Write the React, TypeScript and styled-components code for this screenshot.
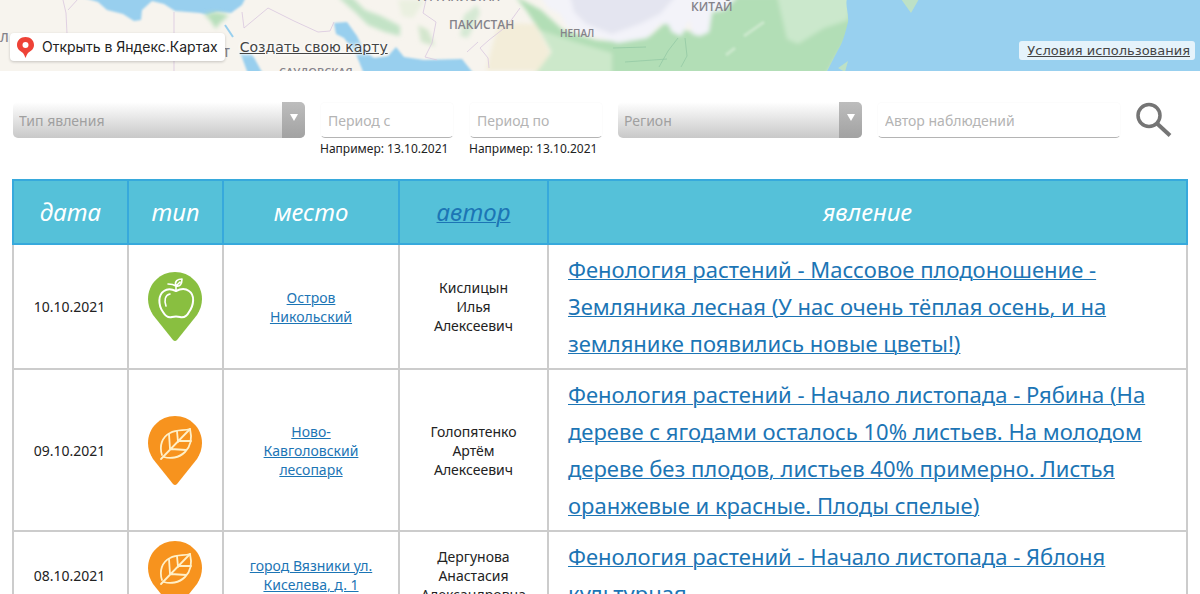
import React from "react";
import styled, { createGlobalStyle } from "styled-components";

const GlobalStyle = createGlobalStyle`
  * { box-sizing: border-box; }
  body {
    margin: 0;
    background: #fff;
    color: #222;
    font-family: "Noto Sans", "Open Sans", sans-serif;
    font-size: 14px;
    line-height: 19px;
  }
`;

const MapStrip = styled.section`
  position: relative;
  height: 71px;
  overflow: hidden;
  background: #f6f3ec;
`;

const MapDrawing = styled.svg`
  display: block;
  width: 100%;
  height: 71px;
`;

const MapLabel = styled.text<{ $size?: number }>`
  font-family: "Open Sans", sans-serif;
  font-size: ${(p) => p.$size ?? 12}px;
  font-weight: 600;
  fill: #84828a;
`;

const MapControls = styled.div`
  position: absolute;
  left: 10px;
  bottom: 10px;
  display: flex;
  align-items: center;
  gap: 15px;
`;

const OpenMapButton = styled.button`
  display: flex;
  align-items: center;
  gap: 8px;
  height: 28px;
  padding: 0 7px;
  border: 0;
  border-radius: 4px;
  background: #fff;
  color: #222;
  font: 14px/20px Inter, Arial, sans-serif;
  box-shadow: 0 1px 3px rgba(0, 0, 0, 0.2);
  cursor: pointer;
`;

const CreateMapLink = styled.a`
  color: #444;
  font: 14px/20px "DejaVu Sans", sans-serif;
  text-shadow: 0 0 2px #fff, 0 0 4px #fff, 0 0 4px #fff;
`;

const TermsLink = styled.a`
  position: absolute;
  right: 5px;
  bottom: 11px;
  padding: 0 5px 0 8px;
  border-radius: 3px;
  background: rgba(255, 255, 255, 0.75);
  color: #444;
  font: 13px/19px "DejaVu Sans", sans-serif;
`;

const Content = styled.main`
  padding: 31px 12px 0;
`;

const Filters = styled.form`
  display: grid;
  grid-template-columns: 292fr 134fr 134fr 244fr 244fr 36px;
  gap: 15px;
  align-items: start;
  padding: 0 16px 0 1px;
`;

const Field = styled.label`
  display: flex;
  flex-direction: column;
  min-width: 0;
`;

const HiddenName = styled.span`
  position: absolute;
  width: 1px;
  height: 1px;
  overflow: hidden;
  clip-path: inset(50%);
`;

const SelectBox = styled.span`
  display: flex;
  position: relative;
  height: 36px;
  border-radius: 5px;
  overflow: hidden;
  background: linear-gradient(#fff, #c8c8c8);
`;

const Select = styled.select`
  flex: 1;
  min-width: 0;
  padding: 0 6px;
  border: 0;
  appearance: none;
  background: transparent;
  color: #a0a0a0;
  font: inherit;
`;

const SelectArrow = styled.span`
  display: flex;
  justify-content: center;
  width: 23px;
  padding-top: 12px;
  background: linear-gradient(#bdbdbd, #a2a2a2);
  pointer-events: none;

  &::before {
    content: "";
    width: 0;
    height: 0;
    border: 4px solid transparent;
    border-top: 7px solid #fff;
    border-bottom: 0;
  }
`;

const TextInput = styled.input`
  width: 100%;
  height: 36px;
  padding: 0 7px;
  border: 1px solid #fcfcfc;
  border-bottom: 1px solid #b4b4b4;
  border-radius: 5px;
  background: #fff;
  color: #222;
  font: inherit;

  &::placeholder { color: #b4b4b4; opacity: 1; }
`;

const Hint = styled.span`
  font-size: 12px;
  line-height: 22px;
  white-space: nowrap;
`;

const SearchButton = styled.button`
  width: 36px;
  height: 36px;
  padding: 0;
  border: 0;
  background: none;
  cursor: pointer;
`;

const Table = styled.table`
  width: 100%;
  margin-top: 19px;
  border-collapse: collapse;
  table-layout: fixed;
`;

const HeadCell = styled.th`
  height: 64px;
  padding: 0;
  border: 2px solid #37a9dc;
  background: #55c1d9;
  color: #fff;
  font-size: 24px;
  font-style: italic;
  font-weight: 400;
  line-height: 32px;
`;

const Cell = styled.td<{ $wide?: boolean }>`
  padding: ${(p) => (p.$wide ? "6px 20px 6px 19px" : "0 20px")};
  border: 2px solid #ccc;
  text-align: ${(p) => (p.$wide ? "left" : "center")};
  font-size: ${(p) => (p.$wide ? 22 : 14)}px;
  line-height: ${(p) => (p.$wide ? 37 : 19)}px;
`;

const TightCell = styled(Cell)`
  padding: 0 2px 0 0;
`;

const NamePart = styled.span`
  display: block;
`;

const Link = styled.a`
  color: #1c75b5;
  text-decoration-thickness: 1px;
`;

const Pin = styled.svg`
  display: block;
  margin: 0 auto;
`;

type Kind = "fruit" | "leaf";

function PinIcon({ kind }: { kind: Kind }) {
  return (
    <Pin width="54" height="69" viewBox="0 0 54 69" role="img" aria-label={kind}>
      <path
        d="M27 0C12 0 0 12 0 27C0 33 2 38 5 43L25 68Q27 70 29 68L49 43C52 38 54 33 54 27C54 12 42 0 27 0Z"
        fill={kind === "fruit" ? "#89bf40" : "#f7931e"}
      />
      {kind === "fruit" ? (
        <g fill="none" stroke="#fff" strokeWidth="2" strokeLinecap="round" strokeLinejoin="round">
          <path d="M28 19C24 17 20 16 16 19C10 23 10 33 15 40C18 45 21 46 24 45Q28 44 32 45C36 46 39 44 41 40C46 33 47 23 41 19C37 16 32 17 28 19Z" />
          <path d="M22 22C17 23 16 28 18 34" strokeWidth="1.6" />
          <path d="M28 19V14Q25 12 20 12M28 14C26 9 30 7 34 7C34 12 32 15 28 14L32 10" strokeWidth="1.6" />
        </g>
      ) : (
        <g fill="none" stroke="#fff0c8" strokeWidth="1.8" strokeLinecap="round" strokeLinejoin="round">
          <path d="M14 39C11 30 14 21 22 17C29 13 36 15 42 13C44 21 43 30 37 36C31 42 22 43 16 41" />
          <path d="M13 43L42 13M22 33L21 18M30 26L29 15M23 33L38 34M31 25H43" />
        </g>
      )}
    </Pin>
  );
}

interface Observation {
  date: string;
  kind: Kind;
  place: string;
  author: string[];
  text: string;
}

const observations: Observation[] = [
  {
    date: "10.10.2021",
    kind: "fruit",
    place: "Остров Никольский",
    author: ["Кислицын", "Илья", "Алексеевич"],
    text: "Фенология растений - Массовое плодоношение - Земляника лесная (У нас очень тёплая осень, и на землянике появились новые цветы!)",
  },
  {
    date: "09.10.2021",
    kind: "leaf",
    place: "Ново-Кавголовский лесопарк",
    author: ["Голопятенко", "Артём", "Алексеевич"],
    text: "Фенология растений - Начало листопада - Рябина (На дереве с ягодами осталось 10% листьев. На молодом дереве без плодов, листьев 40% примерно. Листья оранжевые и красные. Плоды спелые)",
  },
  {
    date: "08.10.2021",
    kind: "leaf",
    place: "город Вязники ул. Киселева, д. 1",
    author: ["Дергунова", "Анастасия", "Александровна"],
    text: "Фенология растений - Начало листопада - Яблоня культурная",
  },
];

function SelectField({ name }: { name: string }) {
  return (
    <Field>
      <HiddenName>{name}</HiddenName>
      <SelectBox>
        <Select defaultValue="">
          <option value="">{name}</option>
        </Select>
        <SelectArrow />
      </SelectBox>
    </Field>
  );
}

function InputField({ name, hint }: { name: string; hint?: string }) {
  return (
    <Field>
      <TextInput type="text" placeholder={name} aria-label={name} />
      {hint && <Hint>{hint}</Hint>}
    </Field>
  );
}

function MapView() {
  return (
    <MapStrip>
      <MapDrawing viewBox="0 0 1200 71" preserveAspectRatio="xMidYMid slice" aria-hidden="true">
        <defs>
          <filter id="soft" x="-10%" y="-30%" width="120%" height="160%">
            <feGaussianBlur stdDeviation="2" />
          </filter>
          <filter id="edge" x="-10%" y="-30%" width="120%" height="160%">
            <feGaussianBlur stdDeviation="0.8" />
          </filter>
        </defs>
        <rect width="1200" height="71" fill="#f7f4ee" />
        <g filter="url(#edge)" fill="#98cfee">
          <path d="M81 -3L98 2L107 10L123 14L134 21L141 20L142 10L152 1L164 4L175 11L200 13L208 15L217 12L231 13L242 5L246 -3Z" />
          <path d="M334 23L347 22L357 36L363 48L374 58L388 56L396 47L404 57L424 60L462 59L474 74H364L356 54L344 38L336 34Z" />
          <path d="M240 52L252 54L263 74H248Z" />
        </g>
        <g filter="url(#soft)">
          <path d="M204 14L216 12L229 15L219 24L216 29L210 20Z" fill="#b7dfbb" />
          <path d="M338 -3H352L365 10L381 16L400 26V36L385 32L368 25L356 13Z" fill="#c3e3c6" />
          <path d="M398 0H425L413 18L402 16Z" fill="#eaf0e0" />
          <path d="M418 25L428 30L435 46L421 42Z" fill="#d3e6cd" />
          <path d="M464 15L477 5L480 13L468 38L460 36Z" fill="#d6e9d4" />
          <path d="M499 23L535 24L550 52L542 71H486L492 47Z" fill="#f3edd9" />
          <path d="M515 -4L541 10L563 30L596 40L622 42L650 36L666 22L690 32L703 17L730 -4H860V20L842 49L827 75H535L552 52L540 31L526 10Z" fill="#b2deb6" />
          <path d="M540 30L575 42L612 53V74H535L552 53Z" fill="#cce8ca" />
          <path d="M777 -4H852L848 20L824 28L798 44L787 39Z" fill="#cbe8cc" />
          <path d="M540 -4H738L724 10L712 12L709 32L700 36L692 34L690 20L681 36L672 32L668 24L660 24L647 38L618 43L594 36L568 28L560 14L548 8Z" fill="#f3f3f9" />
          <path d="M570 -4H676L660 14L640 24L612 34L586 24L574 12Z" fill="#e4e5f0" />
        </g>
        <path d="M848 -4C844 4 849 12 848 22C845 34 843 42 838 50L825 75H1204V-4Z" fill="#98d0ef" />
        <path d="M901 -1H919L911 13L906 6ZM838 68L848 61L845 72Z" fill="#bde1c6" />
        <g fill="none" stroke="#d9c7df" strokeWidth="1" opacity="0.8">
          <path d="M63 0L66 13L67 34L71 50M78 -1L68 10M174 12V71M242 12L244 28L256 18L268 8L294 21L318 32L330 31L334 22" />
          <path d="M426 0L423 13L436 22L432 43L425 57L437 60M520 8L507 26L489 40L480 48L488 58L489 68M478 42L467 52" />
        </g>
        <g fill="none" stroke="#90c6a3" strokeWidth="1" opacity="0.7">
          <path d="M613 48L646 47M625 62L667 59M678 38L668 51L659 67M685 38L687 56L681 67" />
        </g>
        <path d="M726 55L735 48M744 36L764 22" stroke="#cbe8cc" strokeWidth="3" filter="url(#edge)" />
        <path d="M225 25L233 37" stroke="#98cfee" strokeWidth="2" />
        <MapLabel x="449" y="29">ПАКИСТАН</MapLabel>
        <MapLabel x="560" y="37" $size={10}>НЕПАЛ</MapLabel>
        <MapLabel x="691" y="11">КИТАЙ</MapLabel>
        <MapLabel x="279" y="76" $size={11}>САУДОВСКАЯ</MapLabel>
        <MapLabel x="418" y="1">АФГАНИСТАН</MapLabel>
        <MapLabel x="-8" y="42">АЛ</MapLabel>
        <MapLabel x="223" y="57">Т</MapLabel>
      </MapDrawing>
      <MapControls>
        <OpenMapButton type="button">
          <svg width="17" height="21" viewBox="0 0 17 21" aria-hidden="true">
            <path d="M8.500 0C3.500 0 0 3.500 0 8C0 12.500 3.500 14 6 16Q7.500 18 8.500 21Q9.500 18 11 16C13.500 14 17 12.500 17 8C17 3.500 13.500 0 8.500 0Z" fill="#ee4237" />
            <circle cx="8.500" cy="8" r="3" fill="#fff" />
          </svg>
          Открыть в Яндекс.Картах
        </OpenMapButton>
        <CreateMapLink href="#create">Создать свою карту</CreateMapLink>
      </MapControls>
      <TermsLink href="#terms">Условия использования</TermsLink>
    </MapStrip>
  );
}

export default function App() {
  return (
    <>
      <GlobalStyle />
      <MapView />
      <Content>
        <Filters>
          <SelectField name="Тип явления" />
          <InputField name="Период с" hint="Например: 13.10.2021" />
          <InputField name="Период по" hint="Например: 13.10.2021" />
          <SelectField name="Регион" />
          <InputField name="Автор наблюдений" />
          <SearchButton type="button" aria-label="Найти">
            <svg width="36" height="36" viewBox="0 0 36 36" fill="none" stroke="#757575" aria-hidden="true">
              <circle cx="13" cy="13.500" r="11" strokeWidth="3.500" />
              <path d="M21 21.500L34 33.500" strokeWidth="4" />
            </svg>
          </SearchButton>
        </Filters>
        <Table>
          <colgroup>
            <col style={{ width: "115px" }} />
            <col style={{ width: "95px" }} />
            <col style={{ width: "176px" }} />
            <col style={{ width: "149px" }} />
            <col />
          </colgroup>
          <thead>
            <tr>
              <HeadCell>дата</HeadCell>
              <HeadCell>тип</HeadCell>
              <HeadCell>место</HeadCell>
              <HeadCell><Link href="#author">автор</Link></HeadCell>
              <HeadCell>явление</HeadCell>
            </tr>
          </thead>
          <tbody>
            {observations.map((o) => (
              <tr key={o.date}>
                <TightCell>{o.date}</TightCell>
                <TightCell><PinIcon kind={o.kind} /></TightCell>
                <Cell><Link href="#place">{o.place}</Link></Cell>
                <Cell>
                  {o.author.map((part) => (
                    <NamePart key={part}>{part}</NamePart>
                  ))}
                </Cell>
                <Cell $wide><Link href="#observation">{o.text}</Link></Cell>
              </tr>
            ))}
          </tbody>
        </Table>
      </Content>
    </>
  );
}
